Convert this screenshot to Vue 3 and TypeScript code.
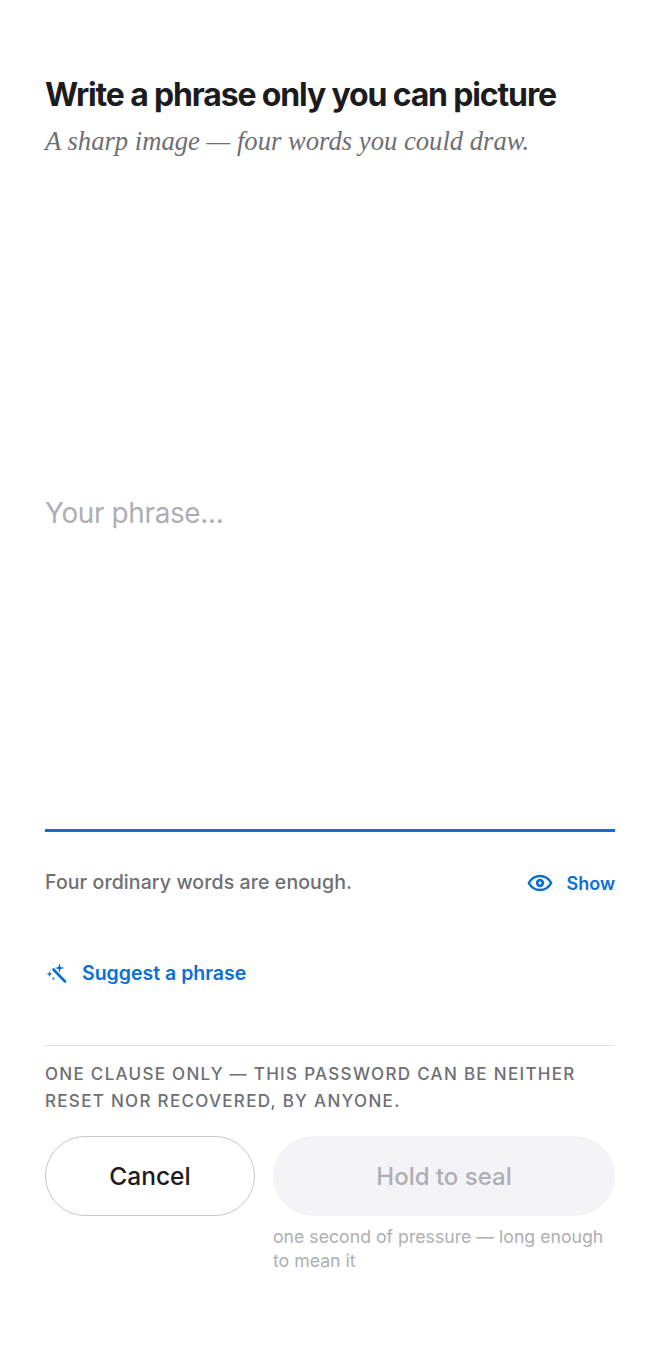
<template>
  <main class="page">
    <header class="head">
      <h1>Write a phrase only you can picture</h1>
      <p class="sub">A sharp image — four words you could draw.</p>
    </header>

    <div class="field">
      <span class="placeholder">Your phrase...</span>
    </div>

    <div class="hint-row">
      <span class="hint">Four ordinary words are enough.</span>
      <button class="link show" type="button">
        <svg width="26" height="18" viewBox="0 0 26 18" fill="none">
          <path d="M1.800 9C4.400 4.300 8.300 2 13 2s8.600 2.300 11.200 7c-2.600 4.700-6.500 7-11.200 7S4.400 13.700 1.800 9Z" stroke="currentColor" stroke-width="2.500" stroke-linejoin="round" />
          <circle cx="13" cy="9" r="4.200" fill="currentColor" />
          <circle cx="13" cy="9" r="1.400" fill="#fff" />
        </svg>
        <span>Show</span>
      </button>
    </div>

    <button class="link suggest" type="button">
      <svg width="22" height="22" viewBox="0 0 22 22" fill="none">
        <path d="M8.500 7.500 20 19.500" stroke="currentColor" stroke-width="2.600" stroke-linecap="round" />
        <path d="M14.500 1 15.600 4.900 19.500 6l-3.900 1.100-1.100 3.900-1.100-3.900L9.500 6l3.900-1.100ZM4.500 9l.8 2.200 2.200.8-2.200.8-.8 2.200-.8-2.200L1.500 12l2.200-.8ZM8.500 15.500a1.100 1.100 0 1 1 0 2.200 1.100 1.100 0 0 1 0-2.200Z" fill="currentColor" />
      </svg>
      <span>Suggest a phrase</span>
    </button>

    <section class="clause">
      <p>ONE CLAUSE ONLY — THIS PASSWORD CAN BE NEITHER RESET NOR RECOVERED, BY ANYONE.</p>
    </section>

    <div class="actions">
      <button class="btn cancel" type="button">Cancel</button>
      <div class="seal-col">
        <button class="btn seal" type="button" disabled>Hold to seal</button>
        <p class="seal-note">one second of pressure — long enough to mean it</p>
      </div>
    </div>
  </main>
</template>

<script setup lang="ts">
</script>

<style>
body {
  background: #fff;
}
</style>

<style scoped>
.page {
  box-sizing: border-box;
  width: 660px;
  height: 1364px;
  padding: 73px 45px 0;
  display: flex;
  flex-direction: column;
  font-family: Inter, "Liberation Sans", sans-serif;
  background: #fff;
}

h1 {
  margin: 0;
  font-size: 32px;
  line-height: 44px;
  font-weight: 700;
  letter-spacing: -1.150px;
  color: #1c1c1e;
  white-space: nowrap;
}

.sub {
  margin: 4px 0 0;
  font-family: "Liberation Serif", serif;
  font-style: italic;
  font-size: 26.650px;
  line-height: 40px;
  color: #6e6e73;
  white-space: nowrap;
}

.field {
  height: 671px;
  box-sizing: border-box;
  padding-top: 36px;
  display: flex;
  align-items: center;
  border-bottom: 3px solid #0a6fd6;
}

.placeholder {
  font-size: 27.800px;
  color: #aeaeb2;
  font-weight: 400;
  letter-spacing: -0.300px;
}

.hint-row {
  display: flex;
  justify-content: space-between;
  align-items: center;
  margin-top: 36px;
  height: 30px;
}

.hint {
  font-size: 19.500px;
  font-weight: 500;
  letter-spacing: 0.100px;
  color: #6e6e73;
  position: relative;
  top: -1px;
}

.link {
  display: flex;
  align-items: center;
  padding: 0;
  border: 0;
  background: none;
  font-family: inherit;
  font-size: 19.500px;
  font-weight: 600;
  color: #0a6fd6;
}

.show {
  gap: 13px;
  font-size: 18px;
}

.suggest {
  margin-top: 60px;
  gap: 15px;
  height: 30px;
  align-self: flex-start;
}

.clause {
  margin-top: 57px;
  border-top: 1px solid #e5e5ea;
  padding-top: 15px;
}

.clause p {
  margin: 0;
  font-size: 17px;
  line-height: 27px;
  font-weight: 500;
  letter-spacing: 1.300px;
  color: #6e6e73;
}

.actions {
  display: flex;
  gap: 18px;
  margin-top: 21px;
  align-items: flex-start;
}

.btn {
  height: 80px;
  border-radius: 40px;
  font-family: inherit;
  font-size: 24.500px;
  font-weight: 500;
}

.cancel {
  box-sizing: border-box;
  width: 210px;
  flex: none;
  background: #fff;
  border: 1px solid #c7c7cc;
  color: #1c1c1e;
}

.seal-col {
  flex: 1;
  min-width: 0;
}

.seal {
  width: 100%;
  border: 0;
  background: #f2f2f7;
  color: #aeaeb2;
  font-size: 24px;
}

.seal-note {
  margin: 9px 0 0;
  font-size: 17.700px;
  line-height: 24px;
  color: #aeaeb2;
}
</style>
